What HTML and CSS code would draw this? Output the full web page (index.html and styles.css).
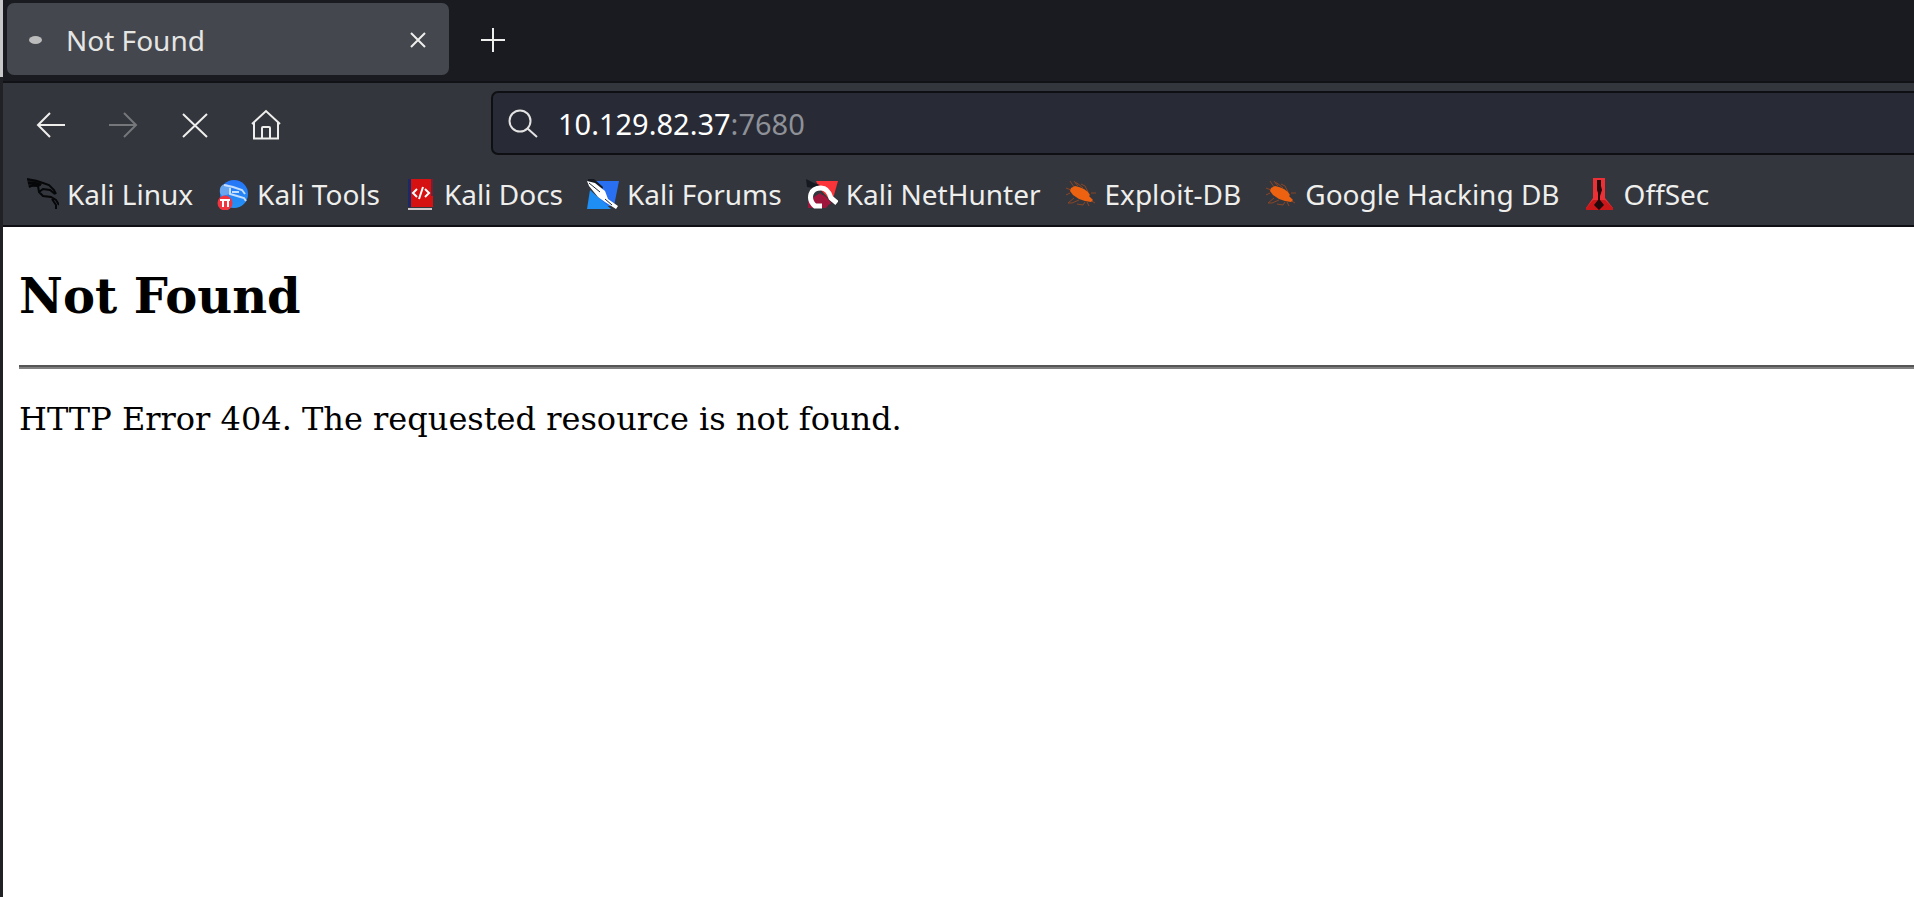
FILE: index.html
```html
<!DOCTYPE html>
<html lang="en">
<head>
<meta charset="utf-8">
<title>Not Found</title>
<link rel="stylesheet" href="styles.css">
</head>
<body>
<svg class="defs" width="0" height="0" aria-hidden="true">
  <symbol id="bug" viewBox="0 0 32 32">
    <g fill="none" stroke="#8a4526" stroke-width="1"><path d="M9 9L5 3M13 8L9 3M18 10L12 5L10 5M23 14L20 8L16 6M6 12L1 10M5 15L1 17M9 20L3 25M14 22L7 25L3 25M20 24L18 27L12 26M25 22L30 25M26 15L31 15M22 24L24 28"/></g>
    <path fill="#ec6210" d="M6 10L10 8L14 9L19 11L23 14L25 17L24 18L28 22L26 24L20 23L14 21L8 17L5 13Z"/>
  </symbol>
</svg>
<div class="browser">
  <header class="tabs">
    <div class="tab">
      <span class="spinner"></span>
      <span class="tab-title">Not Found</span>
      <button class="tab-close" aria-label="Close tab"><svg width="18" height="18" viewBox="0 0 18 18"><path d="M2 2L16 16M16 2L2 16"/></svg></button>
    </div>
    <button class="new-tab" aria-label="New tab"><svg width="26" height="26" viewBox="0 0 26 26"><path d="M13 1V25M1 13H25"/></svg></button>
  </header>
  <nav class="toolbar" aria-label="Navigation">
    <div class="nav-buttons">
      <button aria-label="Back"><svg width="32" height="32" viewBox="0 0 32 32"><path d="M30 16H3M15 4L3 16L15 28"/></svg></button>
      <button aria-label="Forward" disabled><svg width="32" height="32" viewBox="0 0 32 32"><path d="M2 16H29M17 4L29 16L17 28"/></svg></button>
      <button aria-label="Stop"><svg width="32" height="32" viewBox="0 0 32 32"><path d="M4 5L28 28M28 5L4 28"/></svg></button>
      <button aria-label="Home"><svg width="32" height="32" viewBox="0 0 32 32"><path d="M1 15L15 2L29 15M3 13V29.500H27V13M11 29V19Q11 18 12 18H18Q19 18 19 19V29"/></svg></button>
    </div>
    <div class="address" role="textbox" aria-label="Address" contenteditable="true" spellcheck="false"><svg width="32" height="32" viewBox="0 0 32 32"><circle cx="13" cy="14" r="10.500"/><path d="M20 21L30 30"/></svg><span>10.129.82.37<span class="port">:7680</span></span></div>
  </nav>
  <nav class="bookmarks" aria-label="Bookmarks">
    <a href="#"><svg width="32" height="32" viewBox="0 0 32 32"><path d="M0 1L10 2L15 6L12 9H2L1 6Z" fill="#111317"/><g fill="none" stroke="#060708" stroke-width="2"><path d="M0 1L10 3L16 5L22 7L27 12L29 16M1 5L8 5L14 7M2 9L6 7L12 8M11 8L12 14L16 18L24 19L29 22L32 27M12 14L16 11L23 12L28 16M25 21L29 27L29 31"/></g></svg>Kali Linux</a>
    <a href="#"><svg width="32" height="32" viewBox="0 0 32 32"><defs><linearGradient id="tools" x1="0" y1="0" x2="0" y2="1"><stop stop-color="#2675f8"/><stop offset="1" stop-color="#2492f5"/></linearGradient></defs><circle cx="17" cy="16" r="14" fill="url(#tools)"/><path fill="#68a6ef" d="M3 15C2 9 5 6 9 6L14 8L13 16L5 18Z"/><path d="M7 7L16 9L25 12L28 16M13 10L13 16L20 18L27 20L29 23M15 14L22 14" fill="none" stroke="#c5deff" stroke-width="2"/><circle cx="8" cy="25" r="7.500" fill="#f13540"/><path d="M3 22H13M6 22V29M11 22V29" fill="none" stroke="#fff" stroke-width="2"/></svg>Kali Tools</a>
    <a href="#"><svg width="32" height="32" viewBox="0 0 32 32"><path fill="#d61111" d="M4 1H29V29H4Z"/><path fill="#192a66" d="M4 1H7V29H4Z"/><path fill="#732034" d="M27 1H29V18H27Z"/><path fill="#d0c9cb" d="M4 30H28V32H4Z"/><path d="M13 11L9 15L13 19M21 11L25 15L21 19M19 9L15 21" fill="none" stroke="#fff" stroke-width="2"/></svg>Kali Docs</a>
    <a href="#"><svg width="32" height="32" viewBox="0 0 32 32"><path fill="#286ff2" d="M5 3H32L27 28H15Z"/><path fill="#1e8ef5" d="M0 31L3 12L24 31Z"/><path fill="#171920" d="M1 1H7L16 9L15 12L1 7Z"/><path fill="#fff" d="M0 3L8 5L18 13L21 21L31 28L29 31L18 24L11 19L2 8Z"/><path d="M2 5L13 14M18 21L25 27" fill="none" stroke="#202633" stroke-width="1"/></svg>Kali Forums</a>
    <a href="#"><svg width="32" height="32" viewBox="0 0 32 32"><path fill="#fa3438" d="M10 3H32L26 24L14 11Z"/><path fill="#161920" d="M0 1L8 5L14 7L7 10L1 9Z"/><path fill="#9d173c" d="M2 23L14 15L24 25L20 30H2Z"/><path d="M16 28H9Q3 23 5 16Q7 10 15 10Q22 10 25 20L31 25" fill="none" stroke="#fff" stroke-width="5"/><path d="M10 21Q13 15 20 21L24 26" fill="none" stroke="#a4143b" stroke-width="3"/></svg>Kali NetHunter</a>
    <a href="#"><svg width="32" height="32"><use href="#bug"/></svg>Exploit-DB</a>
    <a href="#"><svg width="32" height="32"><use href="#bug"/></svg>Google Hacking DB</a>
    <a href="#"><svg width="32" height="32" viewBox="0 0 32 32"><path fill="#ed3035" d="M9 0H21V20L29 30V32H2V30L9 20Z"/><path fill="#c9171a" d="M9 22L2 30V32H29V30L21 22Z"/><path fill="#23090c" d="M13 2H17V8L18 12L16 18V22L20 27L15 32L10 27L14 22V15L13 12Z"/></svg>OffSec</a>
  </nav>
  <main class="page">
    <h2>Not Found</h2>
    <hr>
    <p>HTTP Error 404. The requested resource is not found.</p>
  </main>
</div>
</body>
</html>
```
FILE: styles.css
```css
* { box-sizing: border-box; }
body { margin: 0; background: #fff; font-family: "Noto Sans", sans-serif; }
button { margin: 0; padding: 0; border: 0; background: none; color: inherit; display: grid; place-items: center; }
svg { display: block; flex: none; }
button svg, .address svg { fill: none; stroke: currentColor; stroke-width: 2; }
.defs { position: absolute; }
.browser { min-height: 100vh; display: flex; flex-direction: column; overflow: hidden; padding-left: 3px; background: linear-gradient(#c8c8c8 77px, #202125 77px); color: #eeeeec; }
.tabs { height: 83px; flex: none; display: flex; gap: 24px; padding: 3px 4px 6px; background: #1a1b20; border-bottom: 2px solid #111216; }
.tab { width: 442px; display: flex; align-items: center; padding: 2px 18px 0 22px; background: #44474e; border-radius: 7px; font-size: 28px; }
.spinner { width: 13px; height: 8px; margin-right: 24px; border-radius: 50%; background: #bcbcbc; }
.tab-title { flex: 1; color: #e5e5e3; }
.tab-close { width: 26px; height: 40px; }
.new-tab { width: 40px; padding-top: 2px; }
.toolbar { height: 82px; flex: none; display: flex; align-items: center; padding: 0 0 2px 32px; background: #33363d; }
.nav-buttons { display: flex; gap: 40px; width: 456px; padding-top: 3px; }
.nav-buttons button:disabled { color: #75777b; }
.address { flex: 1; height: 64px; display: flex; align-items: center; gap: 19px; padding-left: 14px; margin-right: -8px; background: #282a35; border: 2px solid #0e0f13; border-radius: 7px; font-size: 29px; color: #fff; white-space: nowrap; }
.address svg { color: #e3e3e3; }
.port { color: #8e9198; }
.bookmarks { height: 62px; flex: none; display: flex; align-items: center; gap: 24px; padding: 0 0 2px 24px; background: #33363d; border-bottom: 2px solid #0f0f14; white-space: nowrap; }
.bookmarks a { display: flex; align-items: center; gap: 8px; color: #eeeeec; text-decoration: none; font-size: 28px; line-height: 40px; }
.page { flex: 1; padding: 40px 0 0 16px; background: #fff; color: #000; font-family: "DejaVu Serif", serif; }
h2 { margin: 0 0 40px; font-size: 48px; line-height: 58px; }
hr { height: 4px; margin: 0 0 32px; border: 0; border-top: 2px solid #555; background: #808080; }
p { margin: 0; font-size: 32px; line-height: 36px; }
```
